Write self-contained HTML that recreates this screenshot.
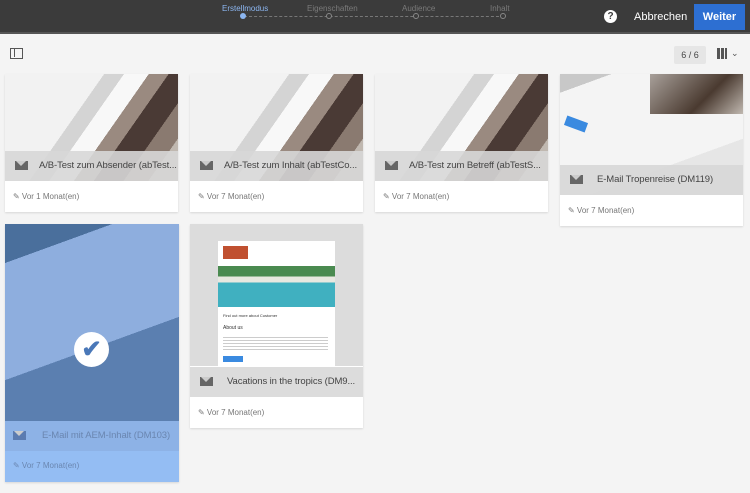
<!DOCTYPE html>
<html><head><style>
*{margin:0;padding:0;box-sizing:border-box}
body{width:750px;height:493px;background:#f4f4f4;font-family:"Liberation Sans",sans-serif;position:relative;overflow:hidden}
.hdr{position:absolute;left:0;top:0;width:750px;height:34px;background:#3b3b3b;border-bottom:2px solid #555}
.st{position:absolute;top:4px;font-size:8px;color:#7a7a7a}
.card{position:absolute;background:#fff;box-shadow:0 1px 2px rgba(0,0,0,.12);overflow:hidden}
.img{position:absolute;left:0;top:0;right:0}
.bar{position:absolute;left:0;right:0;height:30px;background:rgba(215,215,215,.9);font-size:9.5px;color:#444;line-height:30px;white-space:nowrap}
.bar .ic{position:absolute;left:10px;top:10px;width:13px;height:9px;background:#666}
.bar .ic:after{content:"";position:absolute;left:1px;top:0;border-left:5.5px solid transparent;border-right:5.5px solid transparent;border-top:5px solid #ccc}
.bar span{position:absolute;left:34px;letter-spacing:-0.1px}
.ft{position:absolute;left:8px;font-size:8px;color:#777;white-space:nowrap}
.bike{background:linear-gradient(125deg,#f2f2f2 0 40%,#d4d4d4 40% 48%,#f8f8f8 48% 58%,#9a8a80 58% 66%,#4a3a35 66% 78%,#8a7a70 78% 88%,#c0b8b0 88%)}
</style></head><body>
<div class="hdr">
<div class="st" style="left:222px;color:#8cb6f0">Erstellmodus</div>
<div class="st" style="left:307px">Eigenschaften</div>
<div class="st" style="left:402px">Audience</div>
<div class="st" style="left:490px">Inhalt</div>
<div style="position:absolute;left:244px;top:16px;width:260px;border-top:1px dashed #777"></div>
<div style="position:absolute;left:240px;top:13px;width:6px;height:6px;border-radius:50%;background:#8cb6f0"></div>
<div style="position:absolute;left:326px;top:13px;width:6px;height:6px;border-radius:50%;border:1px solid #888;background:#3b3b3b"></div>
<div style="position:absolute;left:413px;top:13px;width:6px;height:6px;border-radius:50%;border:1px solid #888;background:#3b3b3b"></div>
<div style="position:absolute;left:500px;top:13px;width:6px;height:6px;border-radius:50%;border:1px solid #888;background:#3b3b3b"></div>
<div style="position:absolute;left:604px;top:10px;width:13px;height:13px;border-radius:50%;background:#fff;color:#3b3b3b;font-size:10px;font-weight:bold;text-align:center;line-height:13px">?</div>
<div style="position:absolute;left:634px;top:11px;font-size:11px;color:#fff">Abbrechen</div>
<div style="position:absolute;left:694px;top:4px;width:51px;height:26px;background:#2d6fd2;color:#fff;font-size:11px;font-weight:bold;line-height:26px;text-align:center">Weiter</div>
</div>
<div style="position:absolute;left:10px;top:48px;width:13px;height:11px;border:1.5px solid #555"><div style="width:4px;height:8px;border-right:1.5px solid #555"></div></div>
<div style="position:absolute;left:674px;top:46px;width:32px;height:18px;background:#e6e6e6;border-radius:2px;font-size:9px;color:#444;text-align:center;line-height:18px">6 / 6</div>
<div style="position:absolute;left:717px;top:48px;width:10px;height:11px;background:repeating-linear-gradient(90deg,#555 0 3px,transparent 3px 4px)"></div>
<div style="position:absolute;left:731px;top:48px;font-size:9px;color:#555">⌄</div>

<div class="card" style="left:5px;top:74px;width:173px;height:138px"><div class="img bike" style="height:107px"></div><div class="bar" style="top:77px"><div class="ic"></div><span>A/B-Test zum Absender (abTest...</span></div><div class="ft" style="top:118px">✎ Vor 1 Monat(en)</div></div>
<div class="card" style="left:190px;top:74px;width:173px;height:138px"><div class="img bike" style="height:107px"></div><div class="bar" style="top:77px"><div class="ic"></div><span>A/B-Test zum Inhalt (abTestCo...</span></div><div class="ft" style="top:118px">✎ Vor 7 Monat(en)</div></div>
<div class="card" style="left:375px;top:74px;width:173px;height:138px"><div class="img bike" style="height:107px"></div><div class="bar" style="top:77px"><div class="ic"></div><span>A/B-Test zum Betreff (abTestS...</span></div><div class="ft" style="top:118px">✎ Vor 7 Monat(en)</div></div>
<div class="card" style="left:560px;top:74px;width:183px;height:152px"><div class="img" style="height:121px;background:linear-gradient(160deg,#c8c8c8 0 10%,#f4f4f4 10% 70%,#e6e6e6 70%)"></div><div class="img" style="left:90px;width:93px;height:40px;background:linear-gradient(135deg,#a8a09a,#4a3a30 60%,#c0b8b0)"></div><div style="position:absolute;left:5px;top:45px;width:22px;height:10px;background:#3a8ae0;transform:rotate(20deg)"></div><div class="bar" style="top:91px"><div class="ic"></div><span style="left:37px">E-Mail Tropenreise (DM119)</span></div><div class="ft" style="top:132px">✎ Vor 7 Monat(en)</div></div>

<div class="card" style="left:5px;top:224px;width:174px;height:258px;background:#94bdf3"><div class="img" style="height:197px;background:linear-gradient(160deg,#4a6f9c 0 15%,#8eaede 15% 60%,#5b7fb0 60%)"></div><div class="bar" style="top:197px;background:#8db2e6;color:#6a86b0"><div class="ic" style="background:#5b7bb0;left:8px"></div><span style="left:37px">E-Mail mit AEM-Inhalt (DM103)</span></div><div class="ft" style="top:237px;color:#6a86b0">✎ Vor 7 Monat(en)</div>
<div style="position:absolute;left:69px;top:108px;width:35px;height:35px;border-radius:50%;background:#fff;color:#4a78b8;font-size:24px;font-weight:bold;text-align:center;line-height:35px">✔</div></div>

<div class="card" style="left:190px;top:224px;width:173px;height:204px"><div class="img" style="height:142px;background:#dcdcdc"></div>
<div style="position:absolute;left:28px;top:17px;width:117px;height:130px;background:#fff"></div>
<div style="position:absolute;left:33px;top:22px;width:25px;height:13px;background:#c05030"></div>
<div style="position:absolute;left:28px;top:42px;width:117px;height:41px;background:linear-gradient(#4a8a50 0 25%,#e8e8e0 25% 40%,#40b0c0 40%)"></div>
<div style="position:absolute;left:33px;top:89px;font-size:4px;color:#333">Find out more about Customer</div>
<div style="position:absolute;left:33px;top:101px;font-size:5px;color:#333">About us</div>
<div style="position:absolute;left:33px;top:113px;width:105px;height:14px;background:repeating-linear-gradient(#ccc 0 1px,transparent 1px 3px)"></div>
<div style="position:absolute;left:33px;top:132px;width:20px;height:6px;background:#3a8ae0"></div>
<div class="bar" style="top:143px;background:#dcdcdc"><div class="ic"></div><span style="left:37px">Vacations in the tropics (DM9...</span></div><div class="ft" style="top:184px">✎ Vor 7 Monat(en)</div></div>
</body></html>
